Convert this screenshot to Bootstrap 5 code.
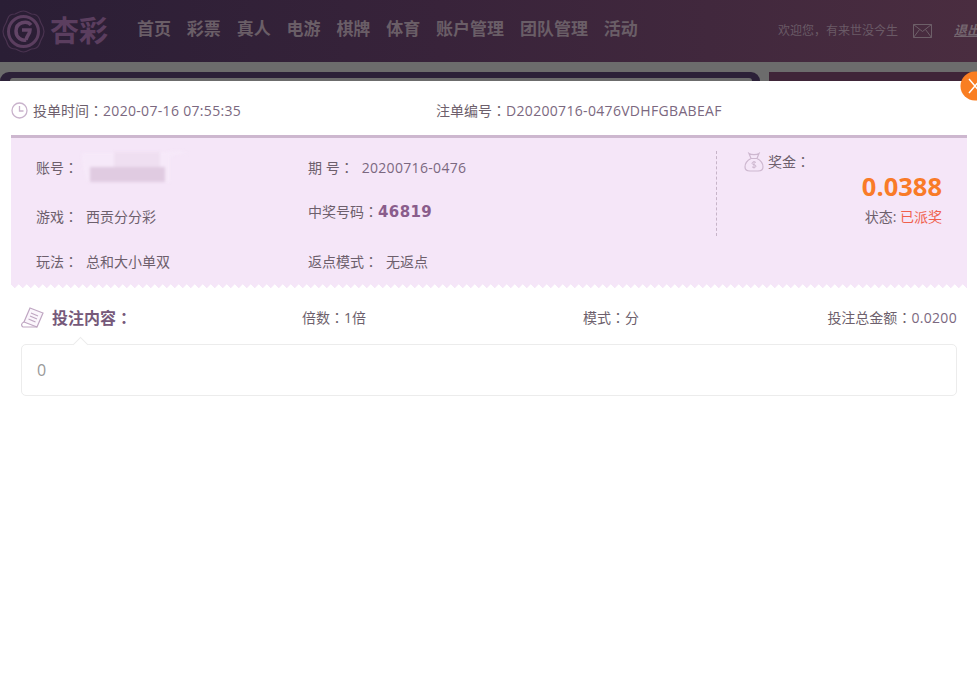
<!DOCTYPE html>
<html lang="zh-CN">
<head>
  <meta charset="UTF-8" />
  <meta name="viewport" content="width=device-width, initial-scale=1.0"/>
  <title>投注详情</title>
  <link href="https://cdn.jsdelivr.net/npm/bootstrap@5.3.0/dist/css/bootstrap.min.css" rel="stylesheet"/>
  <style>
    html, body {
      height: 680px;
      overflow: hidden;
    }

    body {
      position: relative;
      background: #fff;
      font-family: "Open Sans", "Noto Sans CJK SC", sans-serif;
      font-size: 14px;
      color: #6d5f6c;
    }

    /* SC sets full-width punctuation to the left of its box, the traditional forms centre it (needs lang="zh-TW") */
    .cn-colon {
      font-family: "Noto Sans CJK TC", sans-serif;
    }

    .num {
      letter-spacing: 0.32px;
      color: #7b6880;
    }

    .top-bar {
      height: 62px;
      padding-bottom: 4px;
      background: linear-gradient(90deg, #2a1e35 0%, #38233a 45%, #4a2d40 100%);
      white-space: nowrap;
    }

    .logo-mark {
      margin: 4px 0 0 2px;
      width: 43px;
      height: 43px;
      flex: none;
    }

    .logo-text {
      width: 87px;
      margin: 2px 0 0 5px;
      font-size: 29px;
      font-weight: 700;
      line-height: 1;
      color: #5b3e5f;
    }

    .nav-items {
      gap: 15.850px;
      margin-bottom: 1px;
      font-size: 17px;
      font-weight: 700;
      color: #6a5e67;
    }

    .welcome {
      margin: 4px 0 0 auto;
      font-size: 12px;
      color: #6a5a66;
    }

    .mail-icon {
      margin: 4px 22px 0 15px;
    }

    .logout {
      margin: 4px -3px 0 0;
      font-size: 13px;
      font-weight: 700;
      font-style: italic;
      text-decoration: underline;
      color: #74666f;
    }

    .dim-strip {
      height: 19px;
      padding-top: 10px;
      background: #6c6c6c;
    }

    .dim-left {
      width: 760px;
      height: 9px;
      background: #2c2138;
      border-radius: 14px 14px 0 0;
      padding: 6px 8px 0 10px;
    }

    .dim-left-inner {
      height: 3px;
      background: #6c6c6c;
      border-radius: 10px 10px 0 0;
    }

    .dim-right {
      margin-left: 9px;
      flex: 1;
      background: #3f2538;
    }

    .close-x {
      position: absolute;
      top: 71px;
      left: 960px;
      width: 30px;
      height: 30px;
    }

    .meta-row {
      height: 54px;
      padding: 4px 0 0 11px;
    }

    .meta-time {
      width: 425px;
    }

    .clock {
      margin-right: 5px;
    }

    .ticket {
      position: relative;
      height: 153px;
      margin: 0 10px 0 11px;
      padding-left: 25px;
      background: #f5e6f8;
      border-top: 3px solid #cdb7cf;
    }

    .ticket::after {
      content: "";
      position: absolute;
      left: 0;
      right: 0;
      bottom: 0;
      height: 4px;
      background: conic-gradient(from -45deg at 50% 100%, transparent 86deg, #fff 94deg, #fff 354deg, transparent 360deg) 0 0 / 8px 4px repeat-x;
    }

    .ticket-a {
      width: 272px;
    }

    .ticket-b {
      width: 408px;
    }

    .field {
      height: 20px;
      line-height: 20px;
      white-space: nowrap;
    }

    .field-value {
      margin-left: 8px;
    }

    .field-first {
      margin-top: 19px;
    }

    .gap-29 {
      margin-top: 29px;
    }

    .gap-25 {
      margin-top: 25px;
    }

    .gap-24 {
      margin-top: 24px;
    }

    .gap-30 {
      margin-top: 30px;
    }

    .win-number {
      font-family: "DejaVu Sans", sans-serif;
      font-size: 15px;
      font-weight: 700;
      letter-spacing: 0.4px;
      color: #8a5d8c;
    }

    .name-blur {
      vertical-align: top;
      margin: -9px 0 0 2px;
      filter: blur(1.500px);
    }

    .prize-col {
      width: 226px;
      height: 85px;
      margin-top: 13px;
      padding-left: 27px;
      border-left: 1px dashed #c7b4c9;
    }

    .bag {
      margin-right: 4px;
    }

    .prize-amount {
      font-size: 25.500px;
      font-weight: 700;
      line-height: 28px;
      color: #f97b28;
    }

    .prize-state {
      margin-top: 7px;
      line-height: 20px;
    }

    .state-done {
      color: #f0604d;
    }

    .bet-row {
      height: 56px;
      padding: 3px 20px 0 21px;
    }

    .bet-title {
      width: 281px;
      font-size: 16px;
      font-weight: 700;
      color: #76597a;
    }

    .bet-title svg {
      margin-right: 8px;
    }

    .bet-times {
      width: 281px;
    }

    .bet-box {
      position: relative;
      height: 52px;
      margin: 0 20px 0 21px;
      padding-left: 15px;
      line-height: 50px;
      font-size: 16px;
      color: #999;
      border: 1px solid #ececec;
      border-radius: 5px;
    }

    .bet-box::before {
      content: "";
      position: absolute;
      top: -6px;
      left: 53px;
      width: 11px;
      height: 11px;
      background: #fff;
      border-top: 1px solid #ececec;
      border-left: 1px solid #ececec;
      transform: rotate(45deg);
    }
  </style>
</head>
<body>
  <header class="top-bar d-flex align-items-center">
    <svg class="logo-mark" viewBox="0 0 43 43" fill="none" stroke="#4a3350">
      <path stroke-width="1.200" d="M21.500 1c4 0 5 2 8 3 4 0 6 1 7.500 4 1 2 1 3 2 5 2 3 3 5 3 8.500s-1 5.500-3 8.500c-1 2-1 3-2 5-1.500 3-3.500 4-7.500 4-3 1-4 3-8 3s-5-2-8-3c-4 0-6-1-7.500-4-1-2-1-3-2-5-2-3-3-5-3-8.500s1-5.500 3-8.500c1-2 1-3 2-5C7 5 9 4 13 4c3-1 4-3 8.500-3z"/>
      <circle cx="21.500" cy="21.500" r="15" stroke="#5b3e5f" stroke-width="3"/>
      <path stroke="#634567" stroke-width="3.500" d="M29 15c-4-5-15-3-15 6 0 7 6 10 10 9M20 20h8c0 4-3 5-4 10"/>
    </svg>
    <div class="logo-text">杏彩</div>
    <nav class="nav-items d-flex">
      <span>首页</span><span>彩票</span><span>真人</span><span>电游</span><span>棋牌</span><span>体育</span><span>账户管理</span><span>团队管理</span><span>活动</span>
    </nav>
    <span class="welcome">欢迎您，有来世没今生</span>
    <svg class="mail-icon flex-shrink-0" width="19" height="14" viewBox="0 0 19 14" fill="none" stroke="#6d5f68">
      <path d="M.5.500h18v13H.5zM.5.500l9 7 9-7M.5 13.500l6-8M18.500 13.500l-6-8"/>
    </svg>
    <span class="logout">退出</span>
  </header>

  <div class="dim-strip d-flex">
    <div class="dim-left"><div class="dim-left-inner"></div></div>
    <div class="dim-right"></div>
  </div>

  <svg class="close-x" viewBox="0 0 30 30">
    <circle cx="15" cy="15" r="14.500" fill="#f97e22"/>
    <path d="M9 8l12 14M21 8L9 22" stroke="#fff" stroke-width="1.500" fill="none"/>
  </svg>

  <div class="meta-row d-flex align-items-center">
    <div class="meta-time d-flex align-items-center">
      <svg class="clock" width="17" height="17" viewBox="0 0 17 17" fill="none" stroke="#c9b3cc" stroke-width="1.300">
        <circle cx="8.500" cy="8.500" r="7.500"/>
        <path d="M8.500 4v5h4"/>
      </svg>
      <span>投单时间<span class="cn-colon" lang="zh-TW">：</span><span class="num">2020-07-16 07:55:35</span></span>
    </div>
    <span>注单编号<span class="cn-colon" lang="zh-TW">：</span><span class="num">D20200716-0476VDHFGBABEAF</span></span>
  </div>

  <section class="ticket d-flex">
    <div class="ticket-a">
      <div class="field field-first">账号<span class="cn-colon" lang="zh-TW">：</span><svg class="name-blur" width="112" height="36" viewBox="0 0 112 36">
          <path d="M2 5h76c10-2 22-3 30 0-8 1-14 2-18 3v26H8c-4-6-6-19-6-29z" fill="#f6e9f9"/>
          <rect x="34" y="4" width="46" height="15" fill="#efdff1"/>
          <rect x="10" y="19" width="75" height="15" fill="#e0cbe1"/>
        </svg></div>
      <div class="field gap-29">游戏<span class="cn-colon" lang="zh-TW">：</span><span class="field-value">西贡分分彩</span></div>
      <div class="field gap-25">玩法<span class="cn-colon" lang="zh-TW">：</span><span class="field-value">总和大小单双</span></div>
    </div>
    <div class="ticket-b">
      <div class="field field-first">期 号<span class="cn-colon" lang="zh-TW">：</span><span class="field-value num">20200716-0476</span></div>
      <div class="field gap-24">中奖号码<span class="cn-colon" lang="zh-TW">：</span><span class="win-number">46819</span></div>
      <div class="field gap-30">返点模式<span class="cn-colon" lang="zh-TW">：</span><span class="field-value">无返点</span></div>
    </div>
    <div class="prize-col">
      <div class="d-flex align-items-center">
        <svg class="bag" width="20" height="20" viewBox="0 0 20 20" fill="none" stroke="#cdb7cf" stroke-width="1.200">
          <path d="M5 1.500c2 1.500 8 1.500 10 0l-2 5H7zM7 6.500C3 8.500 1 12 1 15c0 3 2 4 5 4h8c3 0 5-1 5-4 0-3-2-6.500-6-8.500"/>
          <path d="M12 10.500c-1-1-4-1-4 .8s4 1 4 2.800-3 1.500-4 .8M10 9v7.500" stroke-width="1"/>
        </svg>
        <span>奖金<span class="cn-colon" lang="zh-TW">：</span></span>
      </div>
      <div class="prize-amount text-end">0.0388</div>
      <div class="prize-state text-end">状态: <span class="state-done">已派奖</span></div>
    </div>
  </section>

  <div class="bet-row d-flex align-items-center">
    <div class="bet-title d-flex align-items-center">
      <svg width="23" height="22" viewBox="0 0 23 22" fill="none" stroke="#bfa6c2" stroke-width="1.200">
        <path d="M9 1l13 5-6 14-13-5z" fill="#fbf6fc"/>
        <path d="M3 15c-3 1-3 4-1 5l14 0M10 6l7 3M9 9l7 3M7.500 12l7 3"/>
      </svg>
      <span>投注内容<span class="cn-colon" lang="zh-TW">：</span></span>
    </div>
    <span class="bet-times">倍数<span class="cn-colon" lang="zh-TW">：</span>1倍</span>
    <span>模式<span class="cn-colon" lang="zh-TW">：</span>分</span>
    <span class="ms-auto">投注总金额<span class="cn-colon" lang="zh-TW">：</span><span class="num">0.0200</span></span>
  </div>

  <div class="bet-box">0</div>

  <script src="https://cdn.jsdelivr.net/npm/bootstrap@5.3.0/dist/js/bootstrap.bundle.min.js"></script>
</body>
</html>
